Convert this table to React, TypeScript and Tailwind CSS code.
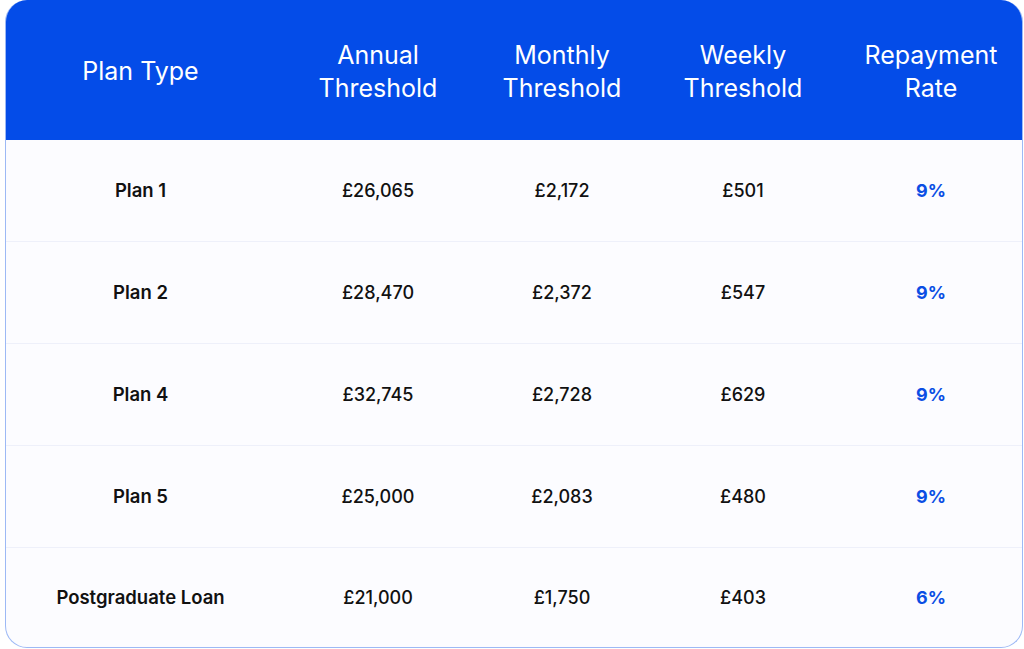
import React from "react";

type Row = {
  plan: string;
  annual: string;
  monthly: string;
  weekly: string;
  rate: string;
};

const rows: Row[] = [
  { plan: "Plan 1", annual: "£26,065", monthly: "£2,172", weekly: "£501", rate: "9%" },
  { plan: "Plan 2", annual: "£28,470", monthly: "£2,372", weekly: "£547", rate: "9%" },
  { plan: "Plan 4", annual: "£32,745", monthly: "£2,728", weekly: "£629", rate: "9%" },
  { plan: "Plan 5", annual: "£25,000", monthly: "£2,083", weekly: "£480", rate: "9%" },
  { plan: "Postgraduate Loan", annual: "£21,000", monthly: "£1,750", weekly: "£403", rate: "6%" },
];

const cols = "grid grid-cols-[269px_206px_162px_200px_1fr]";

const App: React.FC = () => {
  return (
    <div className="w-[1024px] h-[649px] bg-white pl-[5px] pr-px pb-px font-['Inter',sans-serif]">
      <div className="h-full rounded-[22px] border border-t-0 border-[#9db9f5] bg-[#fcfcff] overflow-hidden flex flex-col">
        <div className={`${cols} h-[140px] bg-[#044ce8] text-white text-[25px] leading-[33px] text-center items-center pt-[3px]`}>
          <div className="mt-[-1px]">Plan Type</div>
          <div>
            Annual
            <br />
            Threshold
          </div>
          <div>
            Monthly
            <br />
            Threshold
          </div>
          <div>
            Weekly
            <br />
            Threshold
          </div>
          <div className="pr-[3px]">
            Repayment
            <br />
            Rate
          </div>
        </div>
        {rows.map((r, i) => (
          <div
            key={r.plan}
            className={`${cols} h-[102px] items-center text-center text-[18px] text-[#111] ${
              i < rows.length - 1 ? "border-b border-[#eef0fa]" : "flex-1"
            }`}
          >
            <div className="font-semibold text-[18.5px]">{r.plan}</div>
            <div className="font-medium">{r.annual}</div>
            <div className="font-medium">{r.monthly}</div>
            <div className="font-medium">{r.weekly}</div>
            <div className="font-bold text-[#0a4ee4] pr-[3px]">{r.rate}</div>
          </div>
        ))}
      </div>
    </div>
  );
};

export default App;
